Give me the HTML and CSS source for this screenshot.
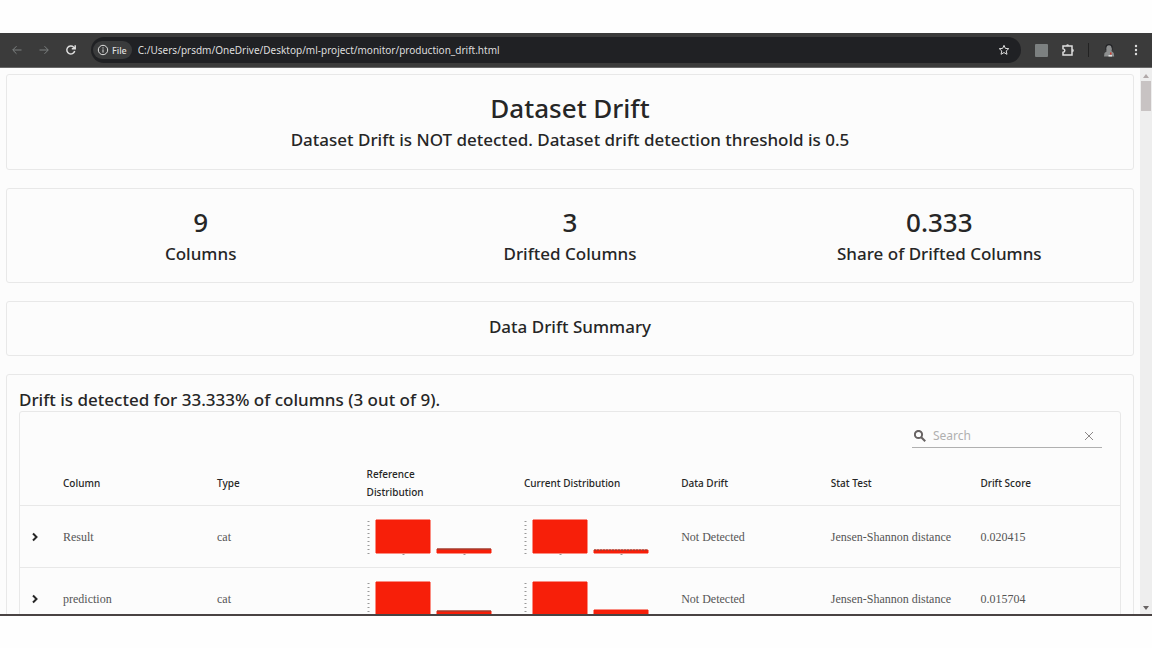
FILE: index.html
```html
<!DOCTYPE html>
<html lang="en">
<head>
<meta charset="utf-8">
<title>production_drift.html</title>
<link rel="stylesheet" href="styles.css">
</head>
<body>
<div class="window">
  <header class="toolbar">
    <button class="icon-btn dim" aria-label="Back"><svg width="12" height="12" viewBox="0 0 12 12"><path d="M10.500 6H2M5.500 2.200 1.700 6l3.800 3.800"/></svg></button>
    <button class="icon-btn dim" aria-label="Forward"><svg width="12" height="12" viewBox="0 0 12 12"><path d="M1.500 6H10M6.500 2.200 10.300 6 6.500 9.800"/></svg></button>
    <button class="icon-btn" aria-label="Reload"><svg width="12" height="12" viewBox="0 0 12 12"><path class="medium" d="M9.700 7A4 4 0 1 1 8.700 3.200L10 4.400M10.200 1.200v3.500H6.800"/></svg></button>
    <div class="address">
      <button class="scheme"><svg width="12" height="12" viewBox="0 0 12 12"><circle cx="6" cy="6" r="4.700"/><path d="M6 5.400v3.200M6 3.300v1.200"/></svg>File</button>
      <input class="url" aria-label="Address" value="C:/Users/prsdm/OneDrive/Desktop/ml-project/monitor/production_drift.html">
      <button class="icon-btn" aria-label="Bookmark"><svg width="12" height="12" viewBox="0 0 12 12"><path d="m6 1.300 1.350 3.100 3.400.300-2.550 2.250.800 3.350L6 8.550 3 10.300l.800-3.350L1.250 4.700l3.400-.300z"/></svg></button>
    </div>
    <button class="icon-btn ext" aria-label="Extension"><svg width="13" height="13" viewBox="0 0 13 13"><rect class="solid" width="13" height="13" rx="1"/></svg></button>
    <button class="icon-btn puzzle" aria-label="Extensions"><svg width="14" height="14" viewBox="0 0 14 14"><path class="medium" d="M2 3h9v3.500V12H2V9.300Q3.800 9 3.800 7.500T2 5.700z"/><path class="solid-light" d="M5 2.800a1.600 1.600 0 0 1 3.200 0zM11.200 5.800a1.600 1.600 0 0 1 0 3.200z"/></svg></button>
    <span class="divider"></span>
    <button class="icon-btn profile" aria-label="Profile"><svg width="12" height="14" viewBox="0 0 12 14"><path class="hair" d="M2.500 7V3.500Q3 1 6 1t3.500 2.500V7z"/><path class="face" d="M4 3q2-1.500 4 0 1.500 3 .500 5l2.200 2 .500 3.500H1L1.500 10l2-1.500Q2.500 5 4 3z"/><path class="red" d="M7 9.500h1.500v2H7z"/><path class="pale" d="M5.500 12H9v1.500H5.500z"/></svg></button>
    <button class="icon-btn menu" aria-label="Menu"><svg width="4" height="12" viewBox="0 0 4 12"><circle class="dot" cx="2" cy="2" r="1.200"/><circle class="dot" cx="2" cy="6" r="1.200"/><circle class="dot" cx="2" cy="10" r="1.200"/></svg></button>
  </header>

  <div class="viewport">
    <main class="report">
      <section class="card hero">
        <h1 class="big">Dataset Drift</h1>
        <p class="label">Dataset Drift is NOT detected. Dataset drift detection threshold is 0.5</p>
      </section>
      <section class="card stats">
        <div><p class="big">9</p><p class="label">Columns</p></div>
        <div><p class="big">3</p><p class="label">Drifted Columns</p></div>
        <div><p class="big">0.333</p><p class="label">Share of Drifted Columns</p></div>
      </section>
      <section class="card summary"><h2 class="label">Data Drift Summary</h2></section>
      <section class="card details">
        <h2 class="label">Drift is detected for 33.333% of columns (3 out of 9).</h2>
        <div class="panel">
          <div class="search">
            <svg width="12" height="12" viewBox="0 0 12 12"><circle cx="4.500" cy="4.500" r="3.600"/><path d="m7.200 7.200 4 4"/></svg>
            <input type="text" placeholder="Search" aria-label="Search">
            <button aria-label="Clear search"><svg width="10" height="10" viewBox="0 0 10 10"><path class="thin" d="m1 1 8 8M9 1 1 9"/></svg></button>
          </div>
          <table>
            <colgroup><col class="c-open"><col class="c-name"><col class="c-mid"><col class="c-dist"><col class="c-dist"><col class="c-mid"><col class="c-mid"><col></colgroup>
            <thead>
              <tr><th></th><th>Column</th><th>Type</th><th>Reference<br>Distribution</th><th>Current Distribution</th><th>Data Drift</th><th>Stat Test</th><th>Drift Score</th></tr>
            </thead>
            <tbody>
              <tr>
                <td><button class="expand" aria-label="Expand Result"><svg width="8" height="10" viewBox="0 0 8 10"><path d="m2 1.500 3.500 3.500L2 8.500"/></svg></button></td>
                <td>Result</td><td>cat</td>
                <td><svg class="chart" width="126" height="38" viewBox="0 0 126 38"><path class="ticks" d="M1.500 3v33"/><path class="bar" d="M9 2h54v33H9zM70 31h54v4H70z"/><path class="cap" d="M70 31h54"/><path class="ticks" d="M36.500 36v1M97.500 36v1"/></svg></td>
                <td><svg class="chart" width="126" height="38" viewBox="0 0 126 38"><path class="ticks" d="M1.500 3v33"/><path class="bar" d="M9 2h54v33H9zM70 32h54v3H70z"/><path class="cap dotted" d="M70 32h54"/><path class="ticks" d="M36.500 36v1M97.500 36v1"/></svg></td>
                <td>Not Detected</td><td>Jensen-Shannon distance</td><td>0.020415</td>
              </tr>
              <tr>
                <td><button class="expand" aria-label="Expand prediction"><svg width="8" height="10" viewBox="0 0 8 10"><path d="m2 1.500 3.500 3.500L2 8.500"/></svg></button></td>
                <td>prediction</td><td>cat</td>
                <td><svg class="chart" width="126" height="38" viewBox="0 0 126 38"><path class="ticks" d="M1.500 3v33"/><path class="bar" d="M9 2h54v33H9zM70 31h54v4H70z"/><path class="cap" d="M70 31h54"/></svg></td>
                <td><svg class="chart" width="126" height="38" viewBox="0 0 126 38"><path class="ticks" d="M1.500 3v33"/><path class="bar" d="M9 2h54v33H9zM70 30h54v5H70z"/></svg></td>
                <td>Not Detected</td><td>Jensen-Shannon distance</td><td>0.015704</td>
              </tr>
            </tbody>
          </table>
        </div>
      </section>
    </main>
    <div class="scrollbar">
      <svg width="6" height="4" viewBox="0 0 6 4"><path class="up" d="M0 4 3 0l3 4z"/></svg>
      <div class="thumb"></div>
      <svg width="6" height="4" viewBox="0 0 6 4"><path class="down" d="M0 0h6L3 4z"/></svg>
    </div>
  </div>
</div>
</body>
</html>
```
FILE: styles.css
```css
* { box-sizing: border-box; }
body { margin: 0; background: #fefefe; color: #262626; font-family: "Noto Sans", "Open Sans", sans-serif; }
h1, h2, p { margin: 0; font-weight: 500; }
button { border: 0; padding: 0; background: none; color: inherit; font: inherit; display: flex; align-items: center; justify-content: center; }
input { border: 0; padding: 0; background: none; outline: 0; min-width: 0; font: inherit; color: inherit; }
svg { display: block; fill: none; stroke: currentColor; flex: none; }

.window { height: 100vh; padding: 33px 0 32px; display: flex; flex-direction: column; }

.toolbar { flex: none; height: 35px; padding: 0 14px 0 10px; display: flex; align-items: center; background: #3b3b3b; border-bottom: 1px solid #686868; color: #dedede; }
.toolbar .icon-btn { width: 14px; margin-right: 13px; }
.toolbar .dim { color: #7c8080; }
.toolbar .medium { stroke-width: 1.5; }
.toolbar .address { flex: 1; height: 26px; border-radius: 13px; padding: 0 10px 0 2px; display: flex; align-items: center; background: #202124; }
.toolbar .scheme { height: 18px; padding: 0 5px 0 4px; gap: 3px; border-radius: 9px; background: #3a3b3c; font-size: 9px; font-weight: 500; }
.toolbar .url { flex: 1; margin-left: 6px; font-size: 10px; }
.toolbar .address .icon-btn { margin-right: 0; }
.toolbar .ext { margin-left: 13px; color: #7c8080; }
.toolbar .solid { fill: #7c8080; stroke: none; }
.toolbar .solid-light { fill: currentColor; stroke: none; }
.toolbar .divider { width: 1px; height: 14px; margin-right: 13px; background: #222; }
.toolbar .profile { margin-right: 18px; }
.toolbar .menu { width: 4px; margin: 0; }
.toolbar .dot { fill: currentColor; stroke: none; }
.hair { fill: #202124; stroke: none; }
.face { fill: #8d8f8f; stroke: none; }
.red { fill: #d33a2c; stroke: none; }
.pale { fill: #dedede; stroke: none; }

.viewport { flex: 1; min-height: 0; display: flex; overflow: hidden; background: #fcfcfc; border-bottom: 2px solid #494343; }
.report { flex: 1; min-width: 0; height: 100%; overflow: hidden; padding: 6px 6px 0; display: flex; flex-direction: column; gap: 18px; }
.card { flex: none; border: 1px solid #e8e8e8; border-radius: 3px; text-align: center; }
.big { font-size: 26px; line-height: 36px; }
.label { font-size: 17px; line-height: 28px; }
.hero { padding: 15px 12px; }
.stats { padding: 15px 9px 14px; display: grid; grid-template-columns: repeat(3, 1fr); }
.summary { padding: 11px 12px 14px; }
.details { padding: 11px 12px; text-align: left; }

.panel { border: 1px solid #e8e8e8; border-radius: 3px; margin-top: -3px; }
.search { width: 190px; height: 24px; margin: 12px 18px 13px auto; padding: 0 8px 0 2px; display: flex; align-items: center; border-bottom: 1px solid #b0b0b0; color: #686363; }
.search input { flex: 1; margin-left: 7px; font-size: 12px; }
.search input::placeholder { color: #b0b0b0; opacity: 1; }
.search svg { stroke-width: 2; }
.search .thin { stroke: #8c8888; stroke-width: 1; }

table { width: 100%; table-layout: fixed; border-collapse: collapse; }
.c-open { width: 31px; }
.c-name { width: 14%; }
.c-mid { width: 13.600%; }
.c-dist { width: 14.300%; }
th, td { padding: 0 12px; text-align: left; vertical-align: middle; border-bottom: 1px solid #e8e8e8; }
th { height: 44px; font-size: 10px; line-height: 18px; font-weight: 500; }
td { height: 62px; padding-top: 2px; font-family: "Liberation Serif", serif; font-size: 12px; color: #555; white-space: nowrap; }
td:first-child { padding-left: 11px; }
.expand { color: #262626; }
.expand svg { stroke-width: 2; }
.chart .bar { fill: #f71f09; stroke: #f71f09; stroke-width: 1; }
.chart .cap { stroke: #7b4a40; stroke-width: 1; }
.chart .dotted { stroke-dasharray: 2 1; }
.chart .ticks { stroke: #999; stroke-width: 2; stroke-dasharray: 1 3; }

.scrollbar { flex: none; width: 12px; padding: 6px 0 4px; display: flex; flex-direction: column; align-items: center; gap: 3px; background: #eee; color: #999; }
.scrollbar svg { stroke: none; }
.scrollbar .thumb { width: 10px; height: 30px; margin-bottom: auto; background: #c8c3c3; }
.up { fill: #b0a8a8; }
.down { fill: #686363; }
```
